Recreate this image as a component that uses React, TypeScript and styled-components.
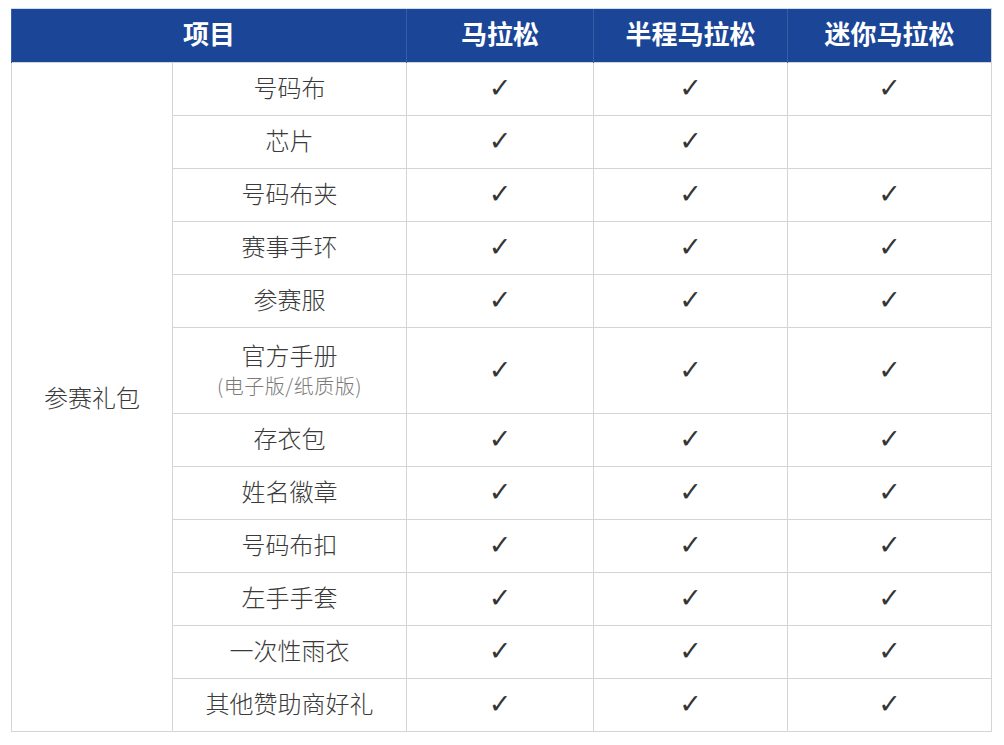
import styled, { createGlobalStyle } from "styled-components";

const GlobalStyle = createGlobalStyle`
  html, body {
    margin: 0;
    padding: 0;
    background: #ffffff;
    font-family: "Noto Sans CJK SC", "Noto Sans", sans-serif;
  }
`;

const Page = styled.div`
  padding: 8px 13px 0 11px;
`;

const Table = styled.table`
  width: 980px;
  border-collapse: collapse;
  table-layout: fixed;
  border: 1px solid #d4d4d4;
`;

const HeadCell = styled.th`
  background: #1b4597;
  color: #ffffff;
  font-size: 26px;
  font-weight: 700;
  height: 48px;
  padding: 0 0 5px;
  line-height: 1.2;
  text-align: center;
  border-left: 1px solid #3a5ea6;
  border-top: 1px solid #cfdcf0;
`;

const Cell = styled.td<{ $tall?: boolean }>`
  height: ${({ $tall }) => ($tall ? "81px" : "48px")};
  padding: 0 0 4px;
  text-align: center;
  vertical-align: middle;
  border: 1px solid #d4d4d4;
  font-size: 24px;
  font-weight: 300;
  color: #3a3a3a;
  line-height: 1.25;
`;

const GroupCell = styled(Cell)`
  padding-bottom: 0;
`;

const Note = styled.div`
  font-size: 20px;
  letter-spacing: 0.5px;
  color: #7a7a7a;
  margin-top: 3px;
`;

const Check = styled.span`
  font-family: "DejaVu Sans", sans-serif;
  font-size: 27px;
  font-weight: 700;
  line-height: 1;
  color: #353535;
`;

type Row = { name: string; note?: string; marks: [boolean, boolean, boolean] };

const rows: Row[] = [
  { name: "号码布", marks: [true, true, true] },
  { name: "芯片", marks: [true, true, false] },
  { name: "号码布夹", marks: [true, true, true] },
  { name: "赛事手环", marks: [true, true, true] },
  { name: "参赛服", marks: [true, true, true] },
  { name: "官方手册", note: "(电子版/纸质版)", marks: [true, true, true] },
  { name: "存衣包", marks: [true, true, true] },
  { name: "姓名徽章", marks: [true, true, true] },
  { name: "号码布扣", marks: [true, true, true] },
  { name: "左手手套", marks: [true, true, true] },
  { name: "一次性雨衣", marks: [true, true, true] },
  { name: "其他赞助商好礼", marks: [true, true, true] },
];

export default function App() {
  return (
    <Page>
      <GlobalStyle />
      <Table>
        <colgroup>
          <col style={{ width: 161 }} />
          <col style={{ width: 234 }} />
          <col style={{ width: 187 }} />
          <col style={{ width: 194 }} />
          <col style={{ width: 204 }} />
        </colgroup>
        <thead>
          <tr>
            <HeadCell colSpan={2}>项目</HeadCell>
            <HeadCell>马拉松</HeadCell>
            <HeadCell>半程马拉松</HeadCell>
            <HeadCell>迷你马拉松</HeadCell>
          </tr>
        </thead>
        <tbody>
          {rows.map((row, i) => (
            <tr key={row.name}>
              {i === 0 && <GroupCell rowSpan={rows.length}>参赛礼包</GroupCell>}
              <Cell $tall={!!row.note}>
                {row.name}
                {row.note && <Note>{row.note}</Note>}
              </Cell>
              {row.marks.map((m, j) => (
                <Cell key={j} $tall={!!row.note}>
                  {m && <Check>✓</Check>}
                </Cell>
              ))}
            </tr>
          ))}
        </tbody>
      </Table>
    </Page>
  );
}
